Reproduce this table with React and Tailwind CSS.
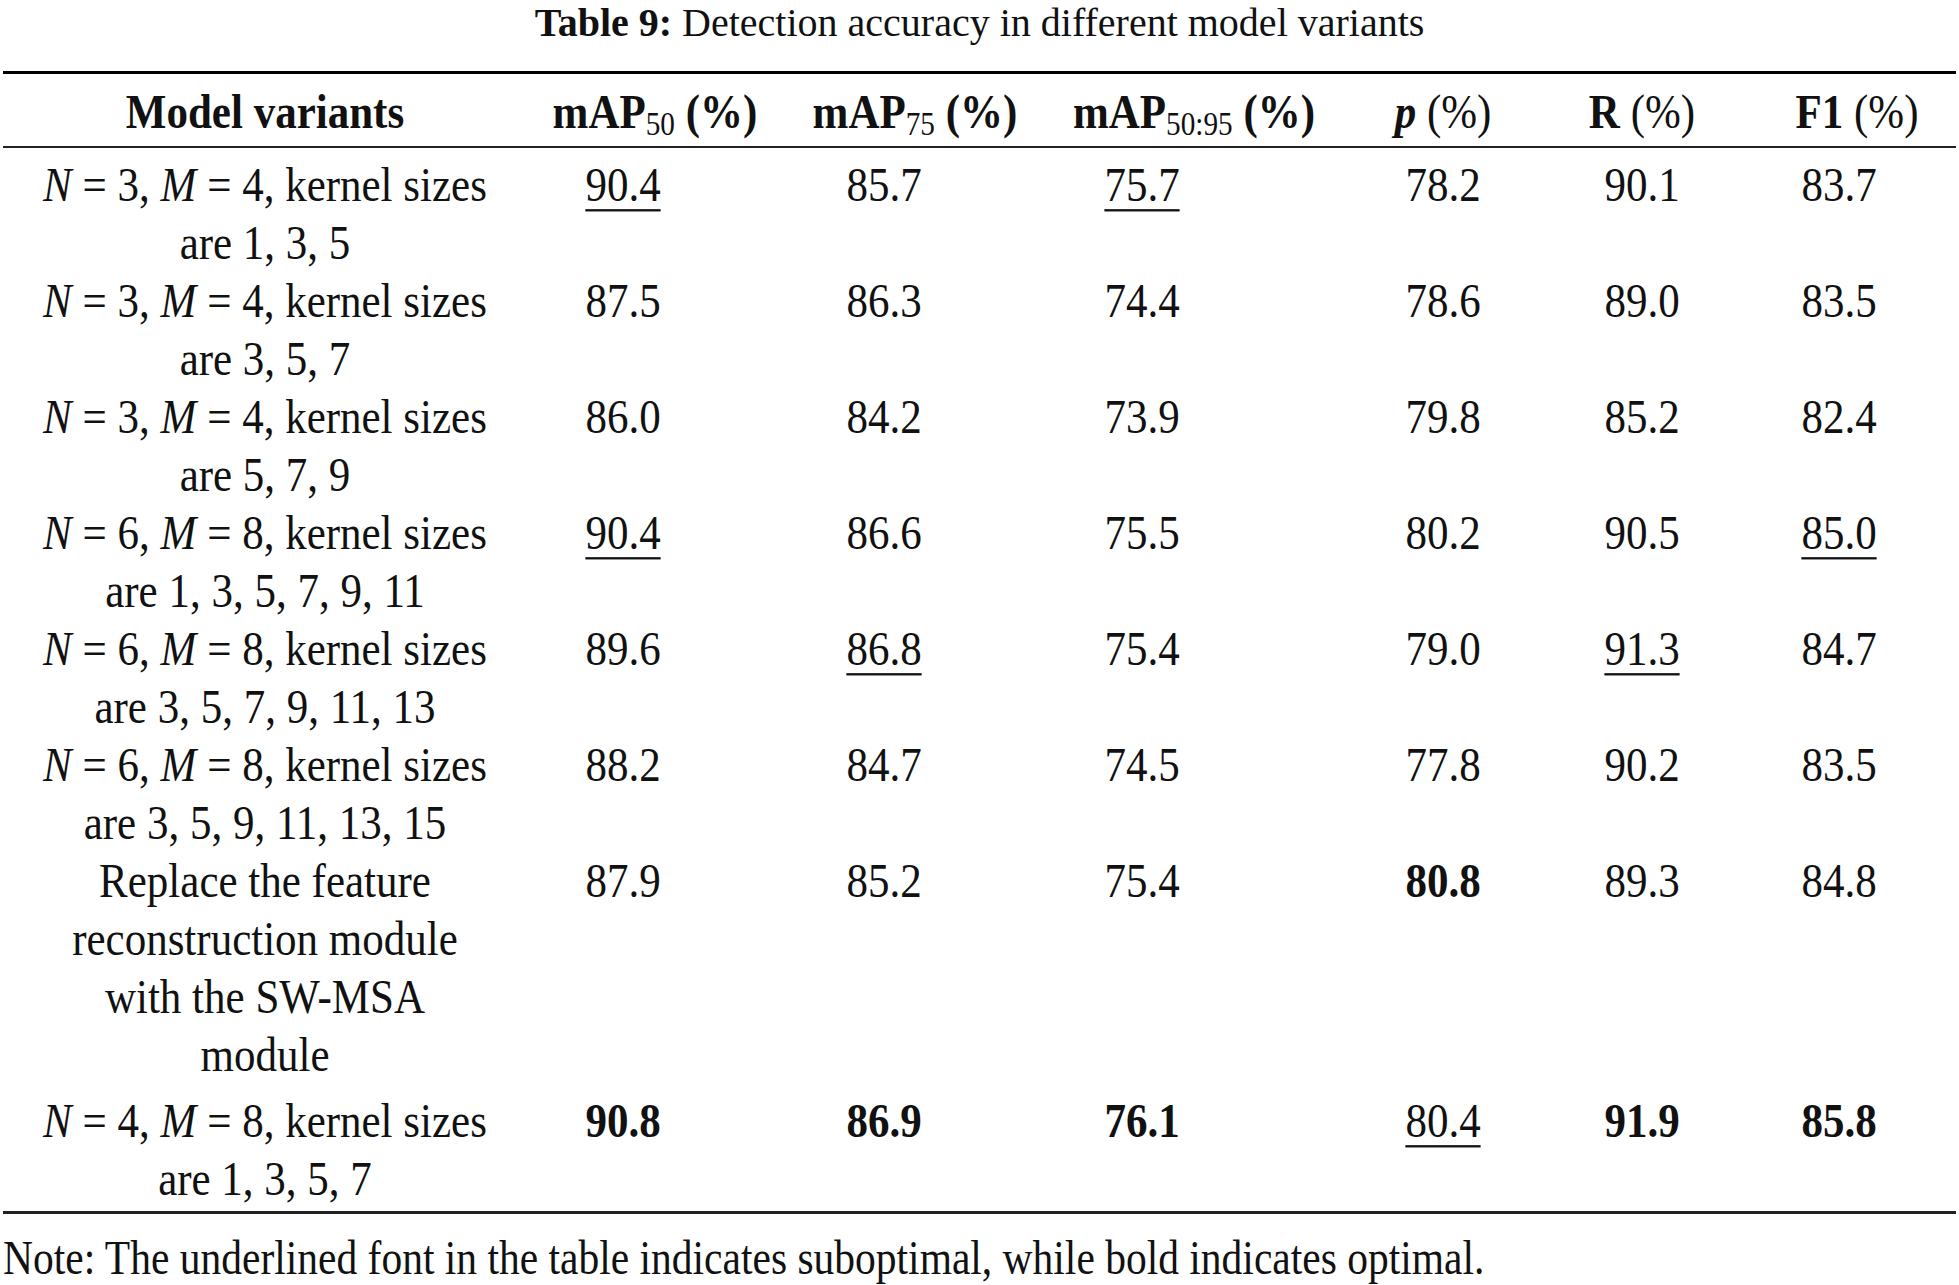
const rows = [
  {
    lines: [[['N', true], ' = 3, ', ['M', true], ' = 4, kernel sizes'], 'are 1, 3, 5'],
    vals: [['90.4', 'u'], ['85.7'], ['75.7', 'u'], ['78.2'], ['90.1'], ['83.7']],
  },
  {
    lines: [[['N', true], ' = 3, ', ['M', true], ' = 4, kernel sizes'], 'are 3, 5, 7'],
    vals: [['87.5'], ['86.3'], ['74.4'], ['78.6'], ['89.0'], ['83.5']],
  },
  {
    lines: [[['N', true], ' = 3, ', ['M', true], ' = 4, kernel sizes'], 'are 5, 7, 9'],
    vals: [['86.0'], ['84.2'], ['73.9'], ['79.8'], ['85.2'], ['82.4']],
  },
  {
    lines: [[['N', true], ' = 6, ', ['M', true], ' = 8, kernel sizes'], 'are 1, 3, 5, 7, 9, 11'],
    vals: [['90.4', 'u'], ['86.6'], ['75.5'], ['80.2'], ['90.5'], ['85.0', 'u']],
  },
  {
    lines: [[['N', true], ' = 6, ', ['M', true], ' = 8, kernel sizes'], 'are 3, 5, 7, 9, 11, 13'],
    vals: [['89.6'], ['86.8', 'u'], ['75.4'], ['79.0'], ['91.3', 'u'], ['84.7']],
  },
  {
    lines: [[['N', true], ' = 6, ', ['M', true], ' = 8, kernel sizes'], 'are 3, 5, 9, 11, 13, 15'],
    vals: [['88.2'], ['84.7'], ['74.5'], ['77.8'], ['90.2'], ['83.5']],
  },
  {
    lines: ['Replace the feature', 'reconstruction module', 'with the SW-MSA', 'module'],
    vals: [['87.9'], ['85.2'], ['75.4'], ['80.8', 'b'], ['89.3'], ['84.8']],
  },
  {
    lines: [[['N', true], ' = 4, ', ['M', true], ' = 8, kernel sizes'], 'are 1, 3, 5, 7'],
    vals: [['90.8', 'b'], ['86.9', 'b'], ['76.1', 'b'], ['80.4', 'u'], ['91.9', 'b'], ['85.8', 'b']],
    last: true,
  },
];

// data cells sit a little left of the header centres in the original
const valPad = ['pr-[64px]', 'pr-[62px]', 'pr-[104px]', '', '', 'pr-[17px]'];

// the source face is taller and narrower than Times, so stretch lines a bit
const tall = 'scale-y-[1.15]';

const Line = ({ parts }) => {
  if (typeof parts === 'string') return <div className={tall}>{parts}</div>;
  return (
    <div className={tall}>
      {parts.map((p, i) =>
        Array.isArray(p) ? (
          <i key={i}>{p[0]}</i>
        ) : (
          <span key={i}>{p}</span>
        )
      )}
    </div>
  );
};

const Val = ({ v, pad }) => {
  const [text, mark] = v;
  return (
    <div className={`self-start text-center ${tall} ${pad}`}>
      <span
        className={
          mark === 'b'
            ? 'font-bold'
            : mark === 'u'
            ? 'underline decoration-[2px] underline-offset-[7px]'
            : ''
        }
      >
        {text}
      </span>
    </div>
  );
};

const Sub = ({ children }) => (
  <sub className="font-normal text-[0.68em] bottom-[-0.2em]">{children}</sub>
);

const cols = 'grid grid-cols-[524px_256px_264px_294px_204px_194px_1fr]';

const App = () => {
  return (
    <div className="w-[1959px] h-[1285px] overflow-hidden bg-white text-[#111] font-['Liberation_Serif',serif]">
      <div className="text-center text-[40px] leading-[45px]">
        <span className="font-bold">Table 9:</span> Detection accuracy in different model variants
      </div>

      <div className="mt-[26px] mx-[3px]">
        <div className="border-t-[3px] border-black" />

        <div className={`${cols} text-[43px] leading-[58px] font-bold pt-[9px] pb-[5px]`}>
          <div className={`text-center ${tall}`}>Model variants</div>
          <div className={`text-center ${tall}`}>
            mAP<Sub>50</Sub> (%)
          </div>
          <div className={`text-center ${tall}`}>
            mAP<Sub>75</Sub> (%)
          </div>
          <div className={`text-center ${tall}`}>
            mAP<Sub>50:95</Sub> (%)
          </div>
          <div className={`text-center ${tall}`}>
            <i>p</i> <span className="font-normal">(%)</span>
          </div>
          <div className={`text-center ${tall}`}>
            R <span className="font-normal">(%)</span>
          </div>
          <div className={`text-center pl-[19px] ${tall}`}>
            F1 <span className="font-normal">(%)</span>
          </div>
        </div>

        <div className="border-t-[2px] border-[#222]" />

        <div className="pt-[8px] pb-[3px] text-[43px] leading-[58px]">
          {rows.map((r, i) => (
            <div key={i} className={`${cols} ${r.last ? 'pt-[8px]' : ''}`}>
              <div className="text-center">
                {r.lines.map((l, j) => (
                  <Line key={j} parts={l} />
                ))}
              </div>
              {r.vals.map((v, j) => (
                <Val key={j} v={v} pad={valPad[j]} />
              ))}
            </div>
          ))}
        </div>

        <div className="border-t-[3px] border-[#222]" />
      </div>

      <div className={`mt-[19px] pl-[3px] text-[41.5px] leading-[50px] ${tall}`}>
        Note: The underlined font in the table indicates suboptimal, while bold indicates optimal.
      </div>
    </div>
  );
};

export default App;
